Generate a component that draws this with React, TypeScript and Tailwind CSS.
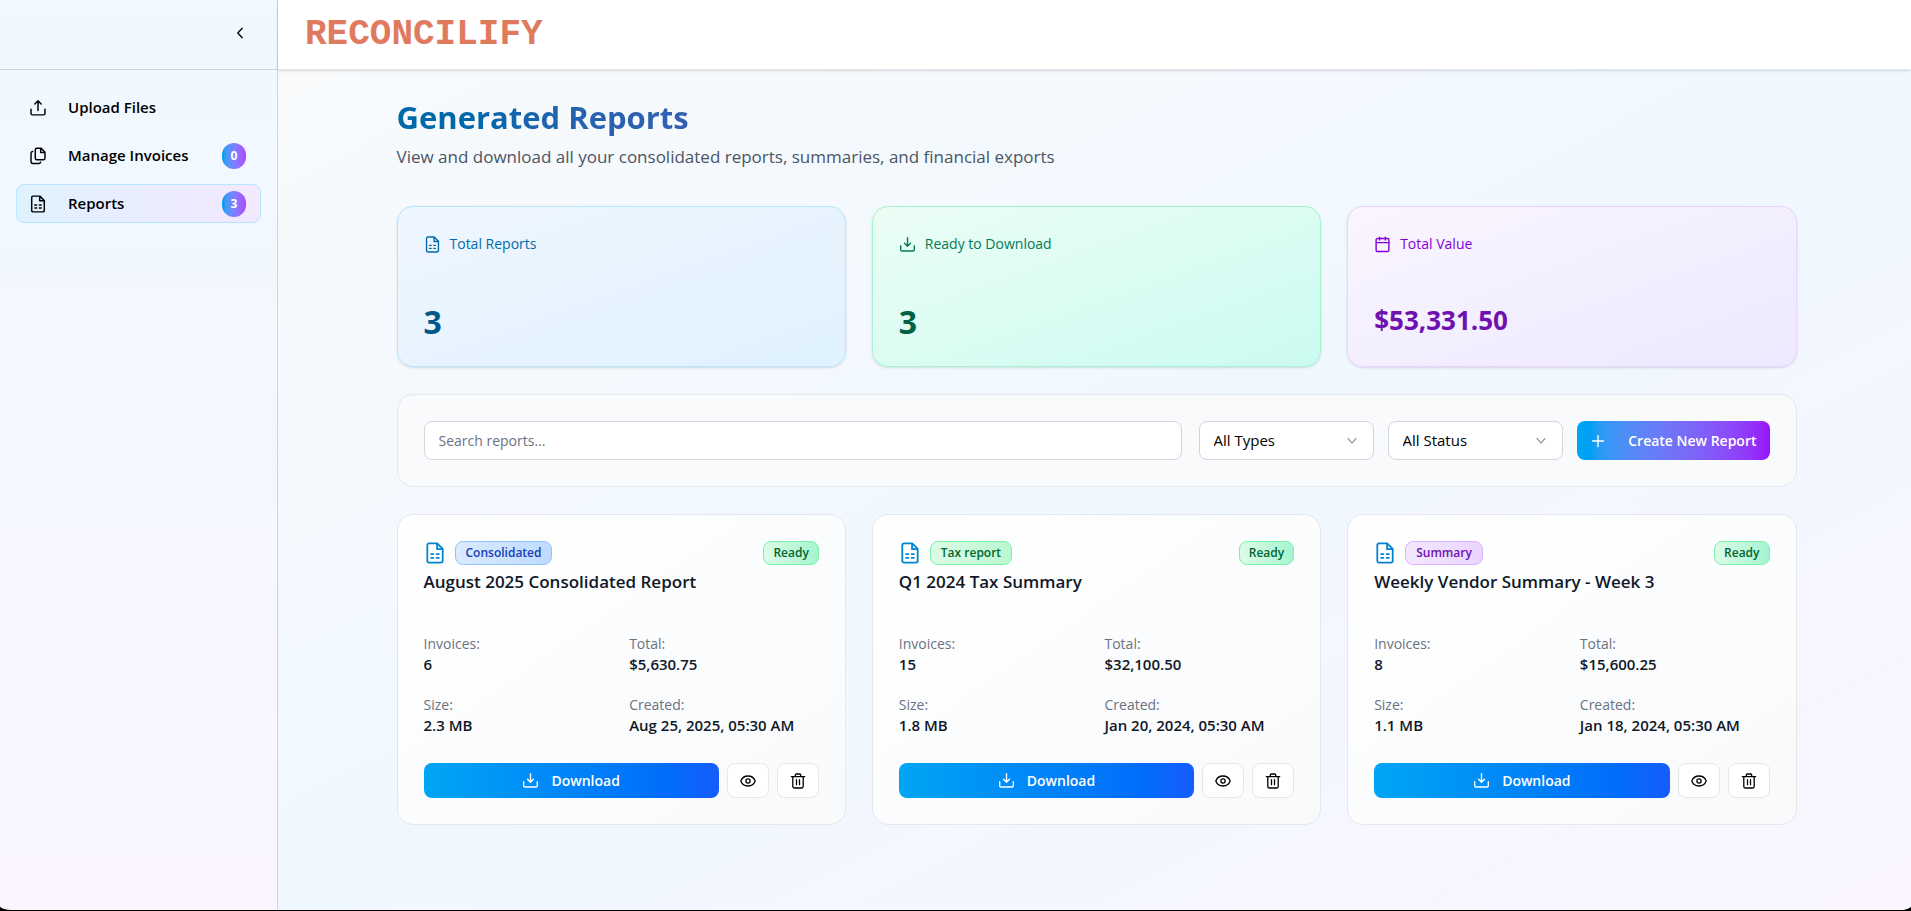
import { useState } from "react";
import type { ReactNode } from "react";
import clsx from "clsx";

function Icon({ size, children }: { size: number; children: ReactNode }) {
  return (
    <svg width={size} height={size} viewBox="0 0 16 16" fill="none" stroke="currentColor" strokeWidth="1.3" strokeLinecap="round" strokeLinejoin="round" aria-hidden="true" className="shrink-0">
      {children}
    </svg>
  );
}

const UploadIcon = ({ size = 18 }) => (
  <Icon size={size}>
    <path d="M8 10.2V1.6M5.2 4.4L8 1.6l2.8 2.8M1.8 9.2v3.7c0 .7.5 1.2 1.2 1.2h10c.7 0 1.2-.5 1.2-1.2V9.2" />
  </Icon>
);

const DownloadIcon = ({ size = 17 }) => (
  <Icon size={size}>
    <path d="M8 1.6v8M5.2 6.8L8 9.6l2.8-2.8M1.6 9.2v3.7c0 .7.5 1.2 1.2 1.2h10.4c.7 0 1.2-.5 1.2-1.2V9.2" />
  </Icon>
);

const CopyIcon = ({ size = 18 }) => (
  <Icon size={size}>
    <path d="M7 1.2h3.8l3.4 3.4v5.4c0 .8-.6 1.4-1.4 1.4H7c-.8 0-1.4-.6-1.4-1.4V2.6c0-.8.6-1.4 1.4-1.4zM10.4 1.4v3.4h3.6M3.3 4c-.8 0-1.5.6-1.5 1.4v7.4c0 1 .8 1.8 1.8 1.8h5.2c.7 0 1.3-.4 1.5-1" />
  </Icon>
);

const ReportIcon = ({ size = 17 }) => (
  <Icon size={size}>
    <path d="M3.7 1h5.9l4 4v8.7c0 .8-.5 1.3-1.3 1.3H3.7c-.8 0-1.3-.5-1.3-1.3V2.3C2.4 1.5 2.9 1 3.7 1zM9.5 1.2v4h4M5.2 8.8h1.6M9.2 8.8h1.6M5.2 11.6h1.6M9.2 11.6h1.6" />
  </Icon>
);

const CalendarIcon = ({ size = 17 }) => (
  <Icon size={size}>
    <rect x="2" y="2.4" width="12" height="12.2" rx="1.2" />
    <path d="M2 6.2h12M5.3 1.2v2.6M10.7 1.2v2.6" />
  </Icon>
);

const EyeIcon = ({ size = 16 }) => (
  <Icon size={size}>
    <path d="M.8 8C2 4.8 4.7 3 8 3s6 1.8 7.2 5c-1.2 3.2-3.9 5-7.2 5S2 11.2.8 8z" />
    <circle cx="8" cy="8" r="2.1" />
  </Icon>
);

const TrashIcon = ({ size = 16 }) => (
  <Icon size={size}>
    <path d="M1.3 3.6h13.4M5.3 3.4V1.9c0-.5.4-.9.9-.9h3.6c.5 0 .9.4.9.9v1.5M2.8 3.8v9.8c0 .8.6 1.4 1.4 1.4h7.6c.8 0 1.4-.6 1.4-1.4V3.8M6.5 6.7v5M9.5 6.7v5" />
  </Icon>
);

const ChevronLeftIcon = () => (
  <Icon size={16}>
    <path d="M10.2 3.2L5.8 8l4.4 4.8" />
  </Icon>
);

const ChevronDownIcon = () => (
  <Icon size={16}>
    <path d="M4 5.5l4 4.5 4-4.5" />
  </Icon>
);

const PlusIcon = () => (
  <Icon size={16}>
    <path d="M8 2.5v11M2.5 8h11" />
  </Icon>
);

const navItems = [
  { label: "Upload Files", icon: <UploadIcon /> },
  { label: "Manage Invoices", icon: <CopyIcon />, count: 0 },
  { label: "Reports", icon: <ReportIcon size={18} />, count: 3, active: true },
];

const stats = [
  {
    label: "Total Reports",
    value: "3",
    icon: <ReportIcon />,
    card: "from-[#eff6ff] to-sky-100 border-sky-200",
    labelColor: "text-sky-700",
    valueStyle: "text-sky-800 text-[32px] leading-10",
  },
  {
    label: "Ready to Download",
    value: "3",
    icon: <DownloadIcon />,
    card: "from-emerald-50 to-teal-100 border-emerald-200",
    labelColor: "text-emerald-700",
    valueStyle: "text-emerald-800 text-[32px] leading-10",
  },
  {
    label: "Total Value",
    value: "$53,331.50",
    icon: <CalendarIcon />,
    card: "from-purple-50 to-violet-100 border-purple-200",
    labelColor: "text-purple-700",
    valueStyle: "text-purple-800 text-[26px] leading-11",
  },
];

const reports = [
  {
    type: "Consolidated",
    badge: "from-blue-100 to-blue-200 border-blue-300 text-blue-800",
    title: "August 2025 Consolidated Report",
    invoices: "6",
    total: "$5,630.75",
    size: "2.3 MB",
    created: "Aug 25, 2025, 05:30 AM",
  },
  {
    type: "Tax report",
    badge: "from-green-100 to-green-200 border-green-300 text-green-800",
    title: "Q1 2024 Tax Summary",
    invoices: "15",
    total: "$32,100.50",
    size: "1.8 MB",
    created: "Jan 20, 2024, 05:30 AM",
  },
  {
    type: "Summary",
    badge: "from-purple-100 to-purple-200 border-purple-300 text-purple-800",
    title: "Weekly Vendor Summary - Week 3",
    invoices: "8",
    total: "$15,600.25",
    size: "1.1 MB",
    created: "Jan 18, 2024, 05:30 AM",
  },
];

function Sidebar() {
  return (
    <aside className="flex w-[278px] shrink-0 flex-col border-r border-slate-300 bg-linear-to-b from-sky-50 to-purple-50">
      <div className="flex h-[70px] items-center justify-end border-b border-slate-300 px-[29px] pb-1">
        <button type="button" aria-label="Collapse sidebar" className="text-black">
          <ChevronLeftIcon />
        </button>
      </div>
      <nav className="flex flex-col gap-[9px] px-4 pt-[18px]">
        {navItems.map((item) => (
          <a
            key={item.label}
            href="#"
            className={clsx(
              "flex h-[39px] items-center rounded-lg border pr-3.5 pl-3 text-[15px] font-semibold text-black",
              item.active ? "border-sky-200 bg-linear-to-r from-sky-100 to-purple-100" : "border-transparent"
            )}
          >
            {item.icon}
            <span className="ml-[21px]">{item.label}</span>
            {item.count !== undefined && (
              <span className="ml-auto flex h-[26px] w-6 items-center justify-center rounded-full bg-linear-to-r from-sky-500 to-purple-500 text-xs font-bold text-white">
                {item.count}
              </span>
            )}
          </a>
        ))}
      </nav>
    </aside>
  );
}

function Filter({ label, options }: { label: string; options: string[] }) {
  return (
    <div className="relative">
      <select aria-label={label} className="h-[39px] w-[175px] appearance-none rounded-lg border border-gray-300 bg-white px-3.5 text-[15px] text-black">
        {options.map((o) => (
          <option key={o}>{o}</option>
        ))}
      </select>
      <span className="pointer-events-none absolute inset-y-0 right-3.5 flex items-center text-gray-400">
        <ChevronDownIcon />
      </span>
    </div>
  );
}

function Field({ label, value }: { label: string; value: string }) {
  return (
    <div>
      <dt className="text-sm leading-[21px] text-gray-500">{label}:</dt>
      <dd className="text-[15px] leading-[21px] font-semibold text-gray-900">{value}</dd>
    </div>
  );
}

function ReportCard({ report }: { report: (typeof reports)[number] }) {
  return (
    <article className="rounded-2xl border border-gray-200 bg-linear-to-br from-white to-slate-50 p-[26px]">
      <div className="flex items-center">
        <span className="text-sky-600">
          <ReportIcon size={22} />
        </span>
        <span className={clsx("ml-[9px] h-6 rounded-lg border bg-linear-to-r px-[10px] text-xs leading-[22px] font-semibold", report.badge)}>{report.type}</span>
        <span className="ml-auto h-6 rounded-lg border border-green-300 bg-linear-to-r from-green-100 to-emerald-200 px-[9px] text-xs leading-[22px] font-semibold text-green-800">
          Ready
        </span>
      </div>
      <h3 className="mt-1 text-[17px] leading-[26px] font-semibold text-gray-900">{report.title}</h3>
      <dl className="mt-[38px] grid grid-cols-2 gap-x-4 gap-y-[19px]">
        <Field label="Invoices" value={report.invoices} />
        <Field label="Total" value={report.total} />
        <Field label="Size" value={report.size} />
        <Field label="Created" value={report.created} />
      </dl>
      <div className="mt-[27px] flex gap-2">
        <button type="button" className="flex h-[35px] flex-1 items-center justify-center gap-3 rounded-lg bg-linear-to-r from-sky-500 to-blue-600 text-sm font-semibold text-white">
          <DownloadIcon />
          Download
        </button>
        <button type="button" aria-label="Preview report" className="flex w-[42px] items-center justify-center rounded-lg border border-gray-200 bg-white text-black">
          <EyeIcon />
        </button>
        <button type="button" aria-label="Delete report" className="flex w-[42px] items-center justify-center rounded-lg border border-gray-200 bg-white text-black">
          <TrashIcon />
        </button>
      </div>
    </article>
  );
}

export default function App() {
  const [search, setSearch] = useState("");

  return (
    <div className="h-screen bg-black pb-px font-['Open_Sans','Noto_Sans',sans-serif]">
      <div className="flex h-full overflow-hidden [border-radius:0_0_12px_12px/0_0_4px_4px]">
        <Sidebar />
        <div className="flex min-w-0 flex-1 flex-col bg-white">
          <header className="z-10 flex h-[70px] shrink-0 items-center border-b border-gray-200 bg-white px-[27px] shadow-sm">
            <span className="font-['Liberation_Mono',monospace] text-4xl leading-none font-bold text-[#e07a5f]">RECONCILIFY</span>
          </header>
          <main className="flex-1 overflow-auto bg-linear-to-br from-slate-50 via-[#f0f8ff] to-purple-50 pl-1">
            <div className="mx-auto max-w-[1400px] pt-6">
              <h1 className="w-full bg-linear-to-r from-sky-700 to-purple-700 bg-clip-text text-[31px] leading-[46px] font-bold text-transparent">Generated Reports</h1>
              <p className="mt-1 text-[17px] leading-[26px] text-gray-600">View and download all your consolidated reports, summaries, and financial exports</p>

              <section className="mt-9 grid grid-cols-3 gap-[26px]">
                {stats.map((s) => (
                  <div key={s.label} className={clsx("flex h-[161px] flex-col justify-between rounded-2xl border bg-linear-to-br px-[26px] py-6 shadow-sm", s.card)}>
                    <div className={clsx("flex items-center gap-[9px] text-sm leading-[26px]", s.labelColor)}>
                      {s.icon}
                      {s.label}
                    </div>
                    <p className={clsx("font-bold", s.valueStyle)}>{s.value}</p>
                  </div>
                ))}
              </section>

              <section className="mt-[27px] flex items-center rounded-2xl border border-gray-200 bg-slate-50 p-[26px]">
                <input
                  type="text"
                  aria-label="Search reports"
                  placeholder="Search reports..."
                  value={search}
                  onChange={(e) => setSearch(e.target.value)}
                  className="h-[39px] min-w-0 flex-1 rounded-lg border border-gray-300 bg-white px-3.5 text-sm placeholder:text-gray-500"
                />
                <div className="ml-[17px] flex gap-3.5">
                  <Filter label="Report type" options={["All Types", "Consolidated", "Tax report", "Summary"]} />
                  <Filter label="Report status" options={["All Status", "Ready"]} />
                  <button type="button" className="flex h-[39px] w-[193px] items-center justify-between rounded-lg bg-linear-to-r from-sky-500 to-purple-600 px-[13px] text-sm font-semibold text-white">
                    <PlusIcon />
                    Create New Report
                  </button>
                </div>
              </section>

              <section className="mt-[27px] grid grid-cols-3 gap-[26px]">
                {reports.map((r) => (
                  <ReportCard key={r.title} report={r} />
                ))}
              </section>
            </div>
          </main>
        </div>
      </div>
    </div>
  );
}
